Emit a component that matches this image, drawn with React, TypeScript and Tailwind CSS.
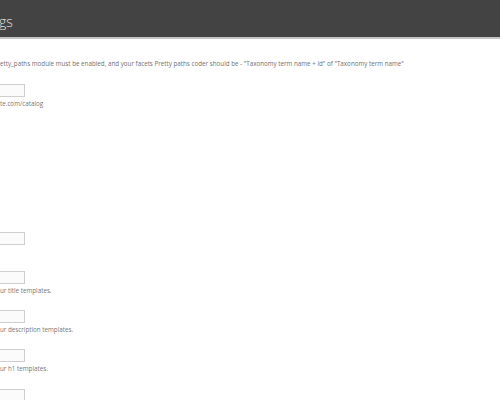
import React from 'react';

const font = { fontFamily: '"Open Sans", "Liberation Sans", sans-serif' };

function Field({ desc, className = '' }: { desc?: string; className?: string }) {
  return (
    <div className={className}>
      <div className="h-[13px] w-[70px] -ml-[45px] border border-[#cfcfcf] bg-[#fbfbfb]" />
      {desc && <div className="mt-[2px] h-[9px] text-[6.25px] leading-[9px] text-[#777]">{desc}</div>}
    </div>
  );
}

export default function App() {
  return (
    <div className="h-[400px] w-[500px] overflow-hidden bg-white" style={font}>
      {/* header */}
      <div className="h-[39px] border-b-2 border-[#c4c4c4] bg-[#434343]">
        <div className="-ml-[1px] pt-[15px] text-[14px] font-light leading-[14px] text-[#e0e0e0]">gs</div>
      </div>

      <div className="flex flex-col">
        <div className="mt-[20px] h-[9px] whitespace-nowrap text-[6.25px] leading-[9px] text-[#707070]">
          etty_paths module must be enabled, and your facets Pretty paths coder should be - "Taxonomy term name + id" of "Taxonomy term name"
        </div>
        <Field className="mt-[16px]" desc="te.com/catalog" />
        <Field className="mt-[124px]" />
        <Field className="mt-[26px]" desc="ur title templates." />
        <Field className="mt-[15px]" desc="ur description templates." />
        <Field className="mt-[15px]" desc="ur h1 templates." />
        <Field className="mt-[16px]" />
      </div>
    </div>
  );
}
